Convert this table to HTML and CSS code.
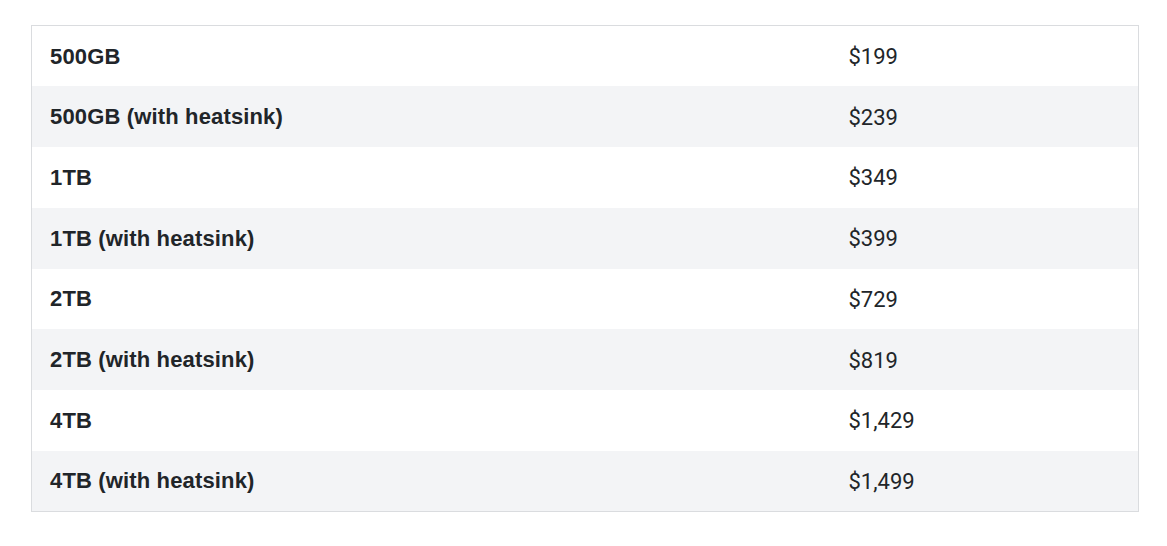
FILE: index.html
```html
<!DOCTYPE html>
<html>
<head>
<meta charset="utf-8">
<link rel="stylesheet" href="styles.css">
</head>
<body>
<table class="price-table">
  <tbody>
    <tr><td class="cap">500GB</td><td class="price">$199</td></tr>
    <tr><td class="cap">500GB (with heatsink)</td><td class="price">$239</td></tr>
    <tr><td class="cap">1TB</td><td class="price">$349</td></tr>
    <tr><td class="cap">1TB (with heatsink)</td><td class="price">$399</td></tr>
    <tr><td class="cap">2TB</td><td class="price">$729</td></tr>
    <tr><td class="cap">2TB (with heatsink)</td><td class="price">$819</td></tr>
    <tr><td class="cap">4TB</td><td class="price">$1,429</td></tr>
    <tr><td class="cap">4TB (with heatsink)</td><td class="price">$1,499</td></tr>
  </tbody>
</table>
</body>
</html>
```
FILE: styles.css
```css
html, body {
  margin: 0;
  background: #ffffff;
}
body {
  padding: 25px 28px 0 31px;
}
.price-table {
  width: 1108px;
  border-collapse: collapse;
  border: 1px solid #dadcdf;
  color: #212529;
}
.price-table tr:nth-child(even) {
  background: #f3f4f6;
}
.price-table td {
  height: 60.75px;
  padding: 1px 18px 0 18px;
  vertical-align: middle;
  box-sizing: border-box;
}
.cap {
  width: 799px;
  font-family: "Liberation Sans", Arial, sans-serif;
  font-weight: bold;
  font-size: 22px;
  letter-spacing: 0.15px;
}
.price {
  font-family: Roboto, sans-serif;
  font-size: 22px;
}
```
